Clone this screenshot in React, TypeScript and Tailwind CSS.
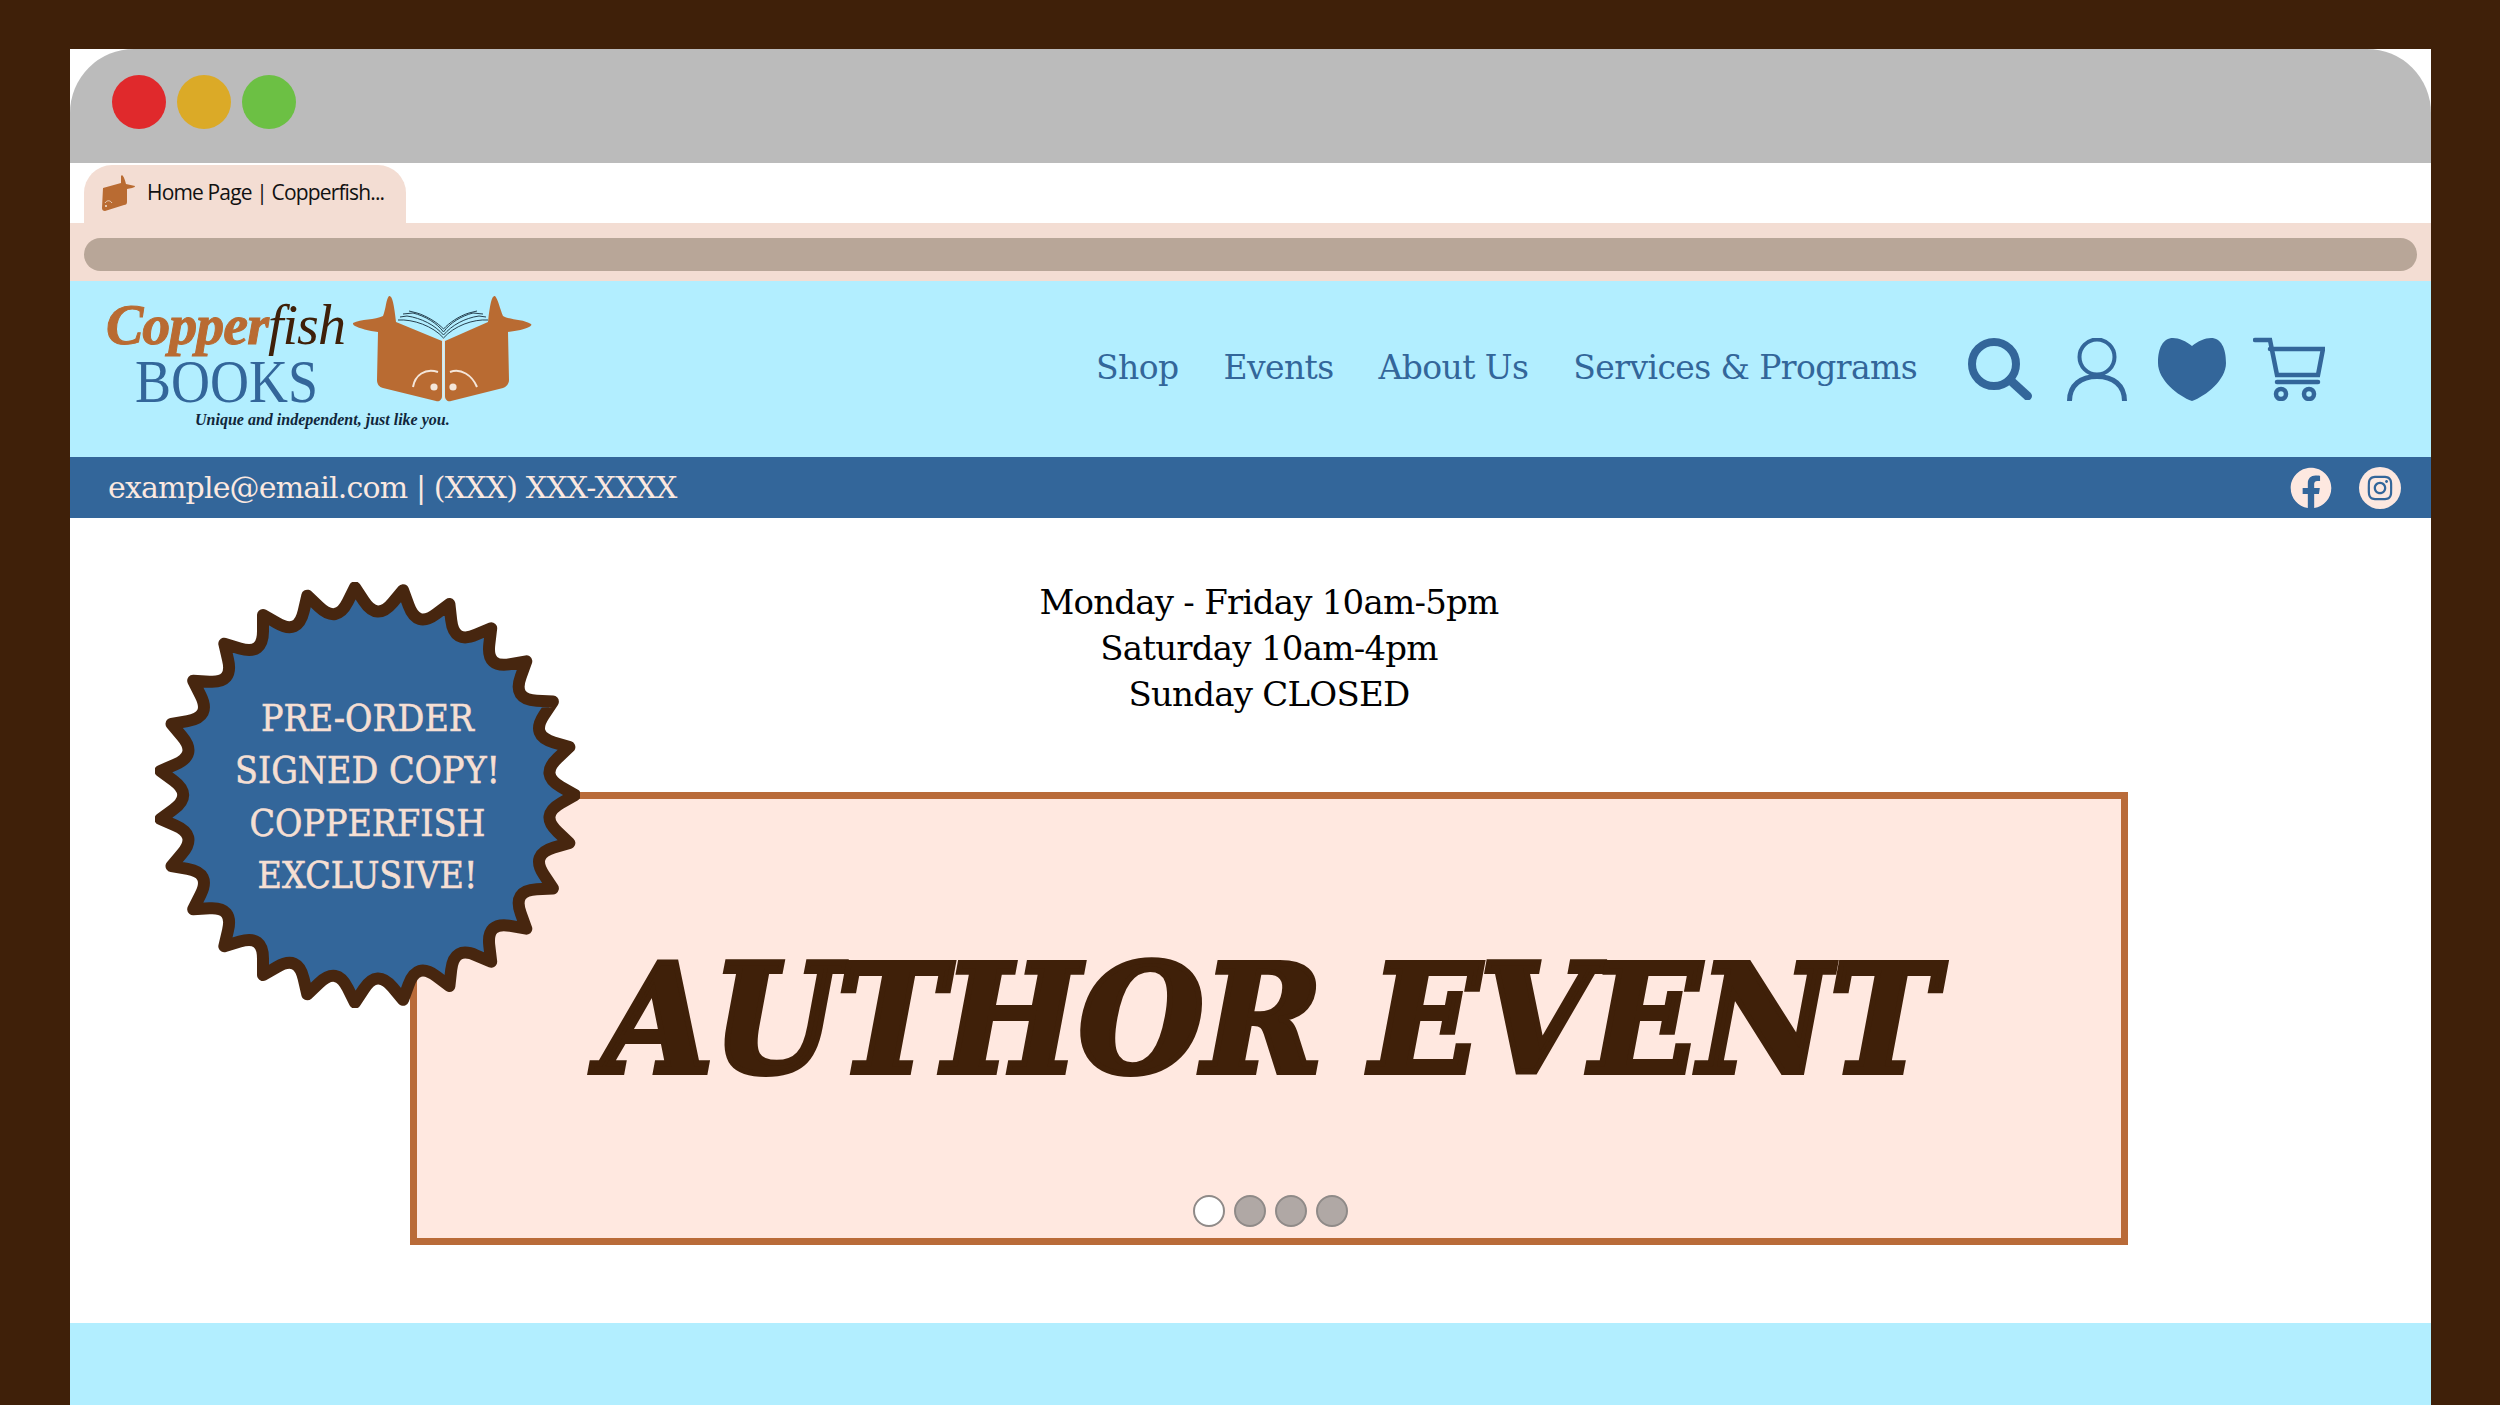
import React from "react";
import { FaFacebook, FaInstagram } from "react-icons/fa";

const serif = "font-['Liberation_Serif',serif]";
const slab = "font-['DejaVu_Serif',serif]";

function starPath() {
  const points = 27;
  const cx = 212;
  const cy = 213;
  const outer = 208;
  const inner = 174;
  const step = (Math.PI * 2) / points;
  let d = "";
  for (let i = 0; i < points; i++) {
    const a = i * step;
    const v = a + step / 2;
    const px = cx + outer * Math.cos(a);
    const py = cy + outer * Math.sin(a);
    const vx = cx + inner * Math.cos(v);
    const vy = cy + inner * Math.sin(v);
    const next = a + step;
    const nx = cx + outer * Math.cos(next);
    const ny = cy + outer * Math.sin(next);
    if (i === 0) d += `M${px.toFixed(1)} ${py.toFixed(1)}`;
    const ax = px + (vx - px) * 0.4;
    const ay = py + (vy - py) * 0.4;
    const bx = nx + (vx - nx) * 0.4;
    const by = ny + (vy - ny) * 0.4;
    d += `L${ax.toFixed(1)} ${ay.toFixed(1)}Q${vx.toFixed(1)} ${vy.toFixed(1)} ${bx.toFixed(1)} ${by.toFixed(1)}L${nx.toFixed(1)} ${ny.toFixed(1)}`;
  }
  return d + "Z";
}

function FishLogo() {
  return (
    <svg viewBox="0 0 180 107" className="w-[180px] h-[107px]">
      <path
        d="M0 28C8 24 22 25 30 21C33 14 33 4 36 1C39 0 41 8 43 27L89 46V101C89 105 86 107 83 106L30 93C26 92 24 89 24 85L25 37C16 36 6 33 2 31C0 30 0 29 0 28Z"
        fill="#b96b32"
      />
      <path
        d="M178 29C170 24 156 25 150 21C147 14 145 4 142 1C139 0 137 8 135 27L92 46V101C92 105 95 107 98 106L150 93C153 92 156 89 156 85L155 37C164 36 172 34 176 32C178 31 179 30 178 29Z"
        fill="#b96b32"
      />
      <g fill="none" stroke="#25404f" strokeWidth="1">
        <path d="M45 25C60 24 80 31 90.5 43C101 31 120 24 135 25" />
        <path d="M47 22L54 21C68 23 82 30 90.5 40C99 30 112 23 126 21L133 22" />
        <path d="M50 19L60 18C72 21 84 28 90.5 37C97 28 108 21 120 18L130 19" />
        <path d="M56 16L64 18C74 21 85 28 90.5 34C96 28 106 21 116 18L124 16" />
      </g>
      <path d="M90.5 44V105" stroke="#f4e6da" strokeWidth="1.5" />
      <path d="M60 92C62 80 72 73 85 77" fill="none" stroke="#f4e6da" strokeWidth="2" />
      <path d="M97 77C108 73 119 80 124 92" fill="none" stroke="#f4e6da" strokeWidth="2" />
      <circle cx="81" cy="92" r="3.6" fill="#f4e6da" />
      <circle cx="100" cy="92" r="3.6" fill="#f4e6da" />
    </svg>
  );
}

function TabIcon() {
  return (
    <svg viewBox="0 0 34 36" className="w-[34px] h-[36px]">
      <path
        d="M1 13L19 8L19 1C20 -1 22 1 24 9L33 11C33 13 28 13 25 14L25 27C25 29 24 30 22 30L3 36C1 36 0 35 0 33Z"
        fill="#b96b32"
      />
      <path d="M3 28C5 25 8 25 10 28" fill="none" stroke="#f4e6da" strokeWidth="0.8" />
      <circle cx="4" cy="31" r="1" fill="#f4e6da" />
    </svg>
  );
}

function SearchIcon() {
  return (
    <svg viewBox="0 0 64 62" className="w-[64px] h-[62px]">
      <circle cx="26" cy="26" r="22" fill="none" stroke="#33669a" strokeWidth="8" />
      <path d="M42 42L59.5 58" stroke="#33669a" strokeWidth="9" strokeLinecap="round" />
    </svg>
  );
}

function UserIcon() {
  return (
    <svg viewBox="0 0 60 63" className="w-[60px] h-[63px]">
      <circle cx="30" cy="19" r="17.5" fill="none" stroke="#33669a" strokeWidth="4" />
      <path d="M2.5 63C2.5 47 14 38.5 30 38.5C46 38.5 57.5 47 57.5 63" fill="none" stroke="#33669a" strokeWidth="5" />
    </svg>
  );
}

function HeartIcon() {
  return (
    <svg viewBox="0 0 68 63" className="w-[68px] h-[63px]">
      <path
        d="M34 8C28 3 21 0 15 0C5 0 0 10 0 25C0 42 20 58 34 63C48 58 68 42 68 25C68 10 63 0 53 0C47 0 40 3 34 8Z"
        fill="#33669a"
      />
    </svg>
  );
}

function CartIcon() {
  return (
    <svg viewBox="0 0 72 64" className="w-[72px] h-[64px]">
      <g fill="none" stroke="#33669a">
        <path d="M2 3H17L24 38H65L70 12H17" strokeWidth="4.5" strokeLinecap="round" />
        <path d="M24 45H65" strokeWidth="4.5" strokeLinecap="round" />
        <circle cx="28" cy="57" r="5" strokeWidth="4.5" />
        <circle cx="56" cy="57" r="5" strokeWidth="4.5" />
      </g>
    </svg>
  );
}

export default function App() {
  return (
    <div className="h-[1405px] overflow-hidden bg-[#3f2009] pt-[49px] pl-[70px]">
      <div className="h-full flex flex-col bg-white w-[2361px]">
        {/* window chrome */}
        <div className="h-[114px] bg-[#bbbbbb] rounded-t-[64px] flex items-center gap-[11px] pl-[42px] pb-[8px]">
          <div className="w-[54px] h-[54px] rounded-full bg-[#e0292c]" />
          <div className="w-[54px] h-[54px] rounded-full bg-[#dbaa27]" />
          <div className="w-[54px] h-[54px] rounded-full bg-[#6cc044]" />
        </div>
        <div className="h-[60px] pt-[2px] pl-[14px] flex">
          <div className="w-[322px] bg-[#f3ddd3] rounded-t-[28px] flex items-center gap-[11px] pl-[18px] pb-[2px]">
            <TabIcon />
            <span className="font-['Open_Sans',sans-serif] text-[21px] tracking-[-0.85px] text-[#111]">Home Page | Copperfish...</span>
          </div>
        </div>
        <div className="h-[58px] bg-[#f3ddd3] px-[14px] pt-[15px]">
          <div className="h-[33px] rounded-full bg-[#b8a698]" />
        </div>

        {/* header */}
        <header className="h-[176px] bg-[#b2eeff] flex items-center justify-between pl-[36px] pr-[106px]">
          <div className="flex items-start self-start pt-[14px]">
            <div className="w-[247px]">
              <div className={`${serif} italic text-[56px] leading-[60px] whitespace-nowrap tracking-[-1px]`}>
                <span className="font-bold text-[#b96b32] [-webkit-text-stroke:1px_#b96b32]">Copper</span>
                <span className="text-[#3f2009]">fish</span>
              </div>
              <div className={`${serif} text-[54px] leading-[52px] pl-[29px] text-[#33669a] scale-y-[1.15] origin-left`}>BOOKS</div>
              <div className={`${serif} italic text-[16px] leading-[20px] mt-[3px] pl-[89px] whitespace-nowrap font-bold text-[#10263a]`}>
                Unique and independent, just like you.
              </div>
            </div>
            <FishLogo />
          </div>
          <div className="flex items-center">
            <nav className={`${slab} flex items-center gap-[45px] text-[33px] tracking-[-0.6px] text-[#33669a] mr-[51px] pb-[3px]`}>
              <span>Shop</span>
              <span>Events</span>
              <span>About Us</span>
              <span>Services &amp; Programs</span>
            </nav>
            <div className="flex items-center">
              <SearchIcon />
              <div className="ml-[35px]"><UserIcon /></div>
              <div className="ml-[31px]"><HeartIcon /></div>
              <div className="ml-[27px]"><CartIcon /></div>
            </div>
          </div>
        </header>

        {/* contact bar */}
        <div className="h-[61px] bg-[#33669a] flex items-center justify-between pl-[38px] pr-[30px]">
          <span className={`${slab} text-[30px] tracking-[-0.85px] text-[#fbe8e0]`}>example@email.com | (XXX) XXX-XXXX</span>
          <div className="flex items-center gap-[27px]">
            <FaFacebook className="w-[42px] h-[42px] text-[#fde8e0] bg-[#33669a] rounded-full" />
            <div className="w-[42px] h-[42px] rounded-full bg-[#fde8e0] flex items-center justify-center">
              <FaInstagram className="w-[28px] h-[28px] text-[#33669a]" />
            </div>
          </div>
        </div>

        {/* hero */}
        <main className="relative flex-1 pl-[340px]">
          <div className="w-[1718px] pt-[61px]">
            <div className={`${slab} text-center text-[34px] tracking-[-0.75px] leading-[46px] text-black`}>
              <p>Monday - Friday 10am-5pm</p>
              <p>Saturday 10am-4pm</p>
              <p>Sunday CLOSED</p>
            </div>
            <div className="relative mt-[75px] h-[453px] border-[7px] border-[#b96b39] bg-[#ffe8e0] flex justify-center pt-[130px]">
              <h1 className={`${slab} font-bold italic text-[150px] leading-[180px] tracking-[-1px] scale-x-[0.96] text-[#3f2009] whitespace-nowrap [-webkit-text-stroke:6px_#3f2009]`}>
                AUTHOR EVENT
              </h1>
              <div className="absolute bottom-[11px] left-0 right-0 flex justify-center gap-[9px] pl-[3px]">
                <div className="w-[32px] h-[32px] rounded-full bg-white border-2 border-[#8f8a88]" />
                <div className="w-[32px] h-[32px] rounded-full bg-[#b0a8a5] border-2 border-[#8f8a88]" />
                <div className="w-[32px] h-[32px] rounded-full bg-[#b0a8a5] border-2 border-[#8f8a88]" />
                <div className="w-[32px] h-[32px] rounded-full bg-[#b0a8a5] border-2 border-[#8f8a88]" />
              </div>
            </div>
          </div>

          {/* badge over the hero's corner */}
          <div className="absolute left-[85px] top-[64px] w-[425px] h-[426px]">
            <svg viewBox="0 0 425 426" className="w-full h-full">
              <path d={starPath()} fill="#33669a" stroke="#47260f" strokeWidth="12" strokeLinejoin="round" />
            </svg>
            <div className={`${slab} absolute inset-0 flex flex-col items-center justify-center pt-[3px] text-[38px] leading-[52.5px] scale-x-[0.88] text-[#f5dfd3] whitespace-nowrap [-webkit-text-stroke:0.6px_#f5dfd3]`}>
              <span>PRE-ORDER</span>
              <span>SIGNED COPY!</span>
              <span>COPPERFISH</span>
              <span>EXCLUSIVE!</span>
            </div>
          </div>
        </main>

        <div className="h-[82px] bg-[#b2eeff]" />
      </div>
    </div>
  );
}
